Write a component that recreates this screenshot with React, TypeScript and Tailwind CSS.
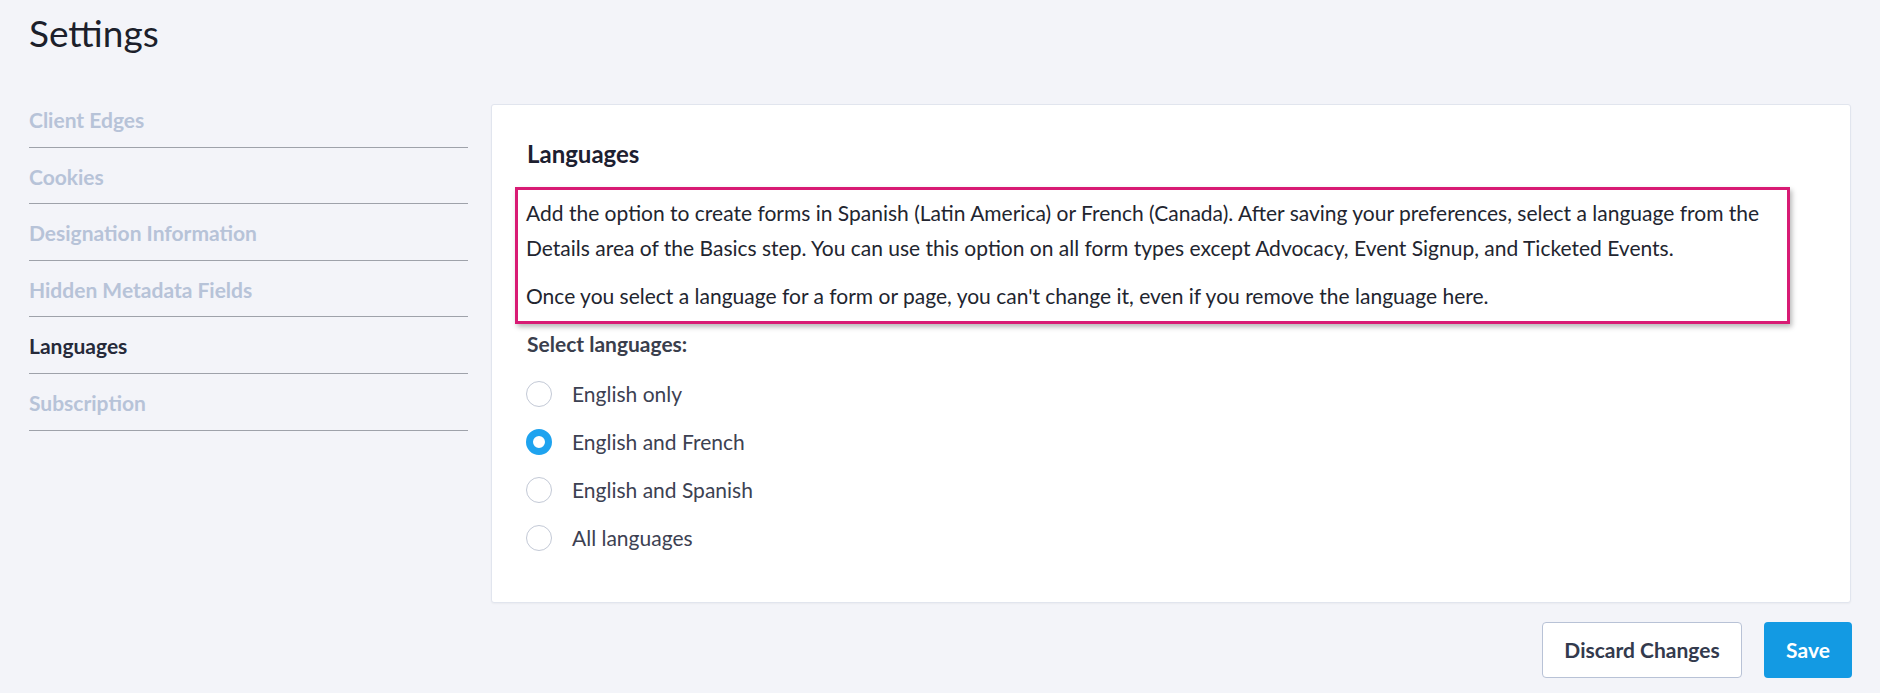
import React from "react";

const navItems = [
  { label: "Client Edges", active: false },
  { label: "Cookies", active: false },
  { label: "Designation Information", active: false },
  { label: "Hidden Metadata Fields", active: false },
  { label: "Languages", active: true },
  { label: "Subscription", active: false },
];

const options = [
  { label: "English only", checked: false },
  { label: "English and French", checked: true },
  { label: "English and Spanish", checked: false },
  { label: "All languages", checked: false },
];

function Radio({ checked }: { checked: boolean }) {
  return checked ? (
    <span className="box-border block h-[26px] w-[26px] shrink-0 rounded-full border-[7px] border-[#1ea3ef] bg-white" />
  ) : (
    <span className="box-border block h-[26px] w-[26px] shrink-0 rounded-full border border-[#c3c9d6] bg-white" />
  );
}

export default function App() {
  return (
    <div className="min-h-[693px] w-full bg-[#f3f4f9] px-[29px] font-['Lato',_'Noto_Sans',_sans-serif]">
      <h1 className="pt-[11px] text-[37px] leading-[44px] font-normal text-[#1c1f2b]">Settings</h1>
      <div className="mt-[36px] flex items-start gap-[23px]">
        <nav className="w-[439px] shrink-0">
          {navItems.map((item) => (
            <div
              key={item.label}
              className={`border-b border-[#9ea2aa] pt-[17px] pb-[14.6px] text-[21px] leading-[24px] font-bold ${
                item.active ? "text-[#262a3a]" : "text-[#b7c3d8]"
              }`}
            >
              {item.label}
            </div>
          ))}
        </nav>
        <div className="flex flex-1 flex-col">
          <section className="mt-[13px] h-[499px] rounded-[3px] border border-[#e1e5ee] bg-white pt-[34px] pl-[35px] shadow-[0_1px_2px_rgba(0,0,0,0.04)]">
            <h2 className="text-[24px] leading-[30px] font-bold text-[#1d2030]">Languages</h2>
            <div className="mt-[18px] -ml-[12px] w-[1275px] border-[3px] border-[#d81b74] px-[8px] pt-[5px] pb-[8px] text-[21px] leading-[35px] text-[#22252f] shadow-[2px_3px_5px_rgba(0,0,0,0.28)]">
              <p>
                Add the option to create forms in Spanish (Latin America) or French (Canada). After saving your
                preferences, select a language from the Details area of the Basics step. You can use this option on
                all form types except Advocacy, Event Signup, and Ticketed Events.
              </p>
              <p className="mt-[13px]">
                Once you select a language for a form or page, you can't change it, even if you remove the language
                here.
              </p>
            </div>
            <div className="mt-[8px] text-[21px] leading-[24px] font-bold text-[#3a3e4c]">Select languages:</div>
            <div className="mt-[14px] flex flex-col">
              {options.map((o) => (
                <label key={o.label} className="flex h-[48px] items-center gap-[20px] -ml-px">
                  <Radio checked={o.checked} />
                  <span className="text-[21px] leading-[24px] text-[#3c4152]">{o.label}</span>
                </label>
              ))}
            </div>
          </section>
          <div className="mt-[19px] flex justify-end gap-[22px] -mr-px">
            <button className="h-[56px] w-[200px] rounded-[4px] border border-[#b8c2d6] bg-white text-[21px] font-bold text-[#333a4d]">
              Discard Changes
            </button>
            <button className="h-[56px] w-[88px] rounded-[4px] bg-[#139ae3] text-[21px] font-bold text-white">
              Save
            </button>
          </div>
        </div>
      </div>
    </div>
  );
}
